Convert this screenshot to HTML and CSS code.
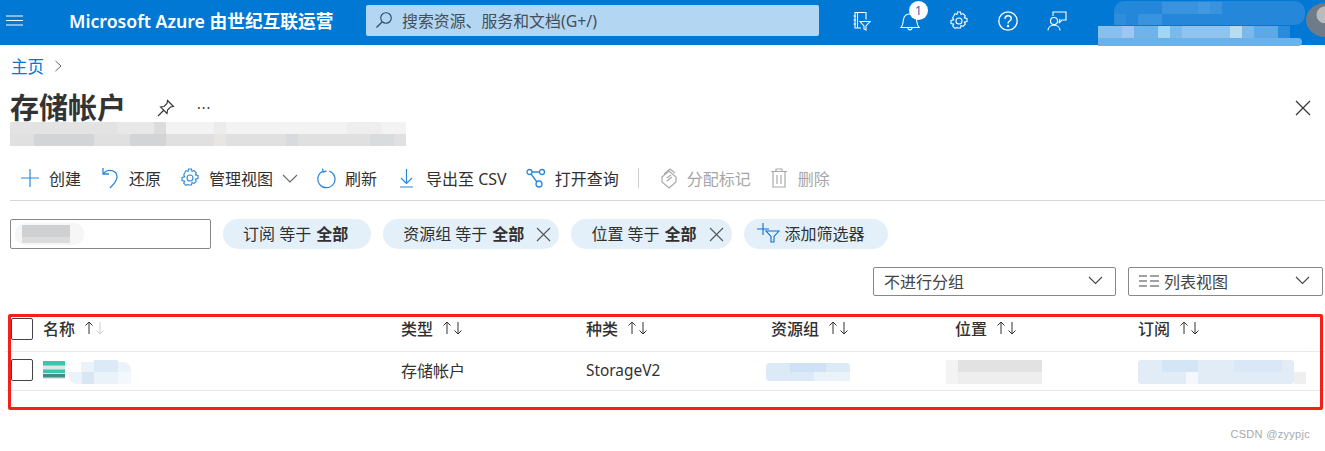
FILE: index.html
```html
<!DOCTYPE html>
<html lang="zh-CN">
<head>
<meta charset="utf-8">
<title>存储帐户</title>
<link rel="stylesheet" href="styles.css">
</head>
<body>
<header class="topbar">
  <svg class="burger" width="18" height="12" viewBox="0 0 18 12"><path d="M0 1h17M0 5.500h17M0 10h17" stroke="#fff" fill="none"/></svg>
  <div class="brand">Microsoft Azure 由世纪互联运营</div>
  <div class="search">
    <svg width="18" height="18" viewBox="0 0 18 18"><circle cx="11" cy="7" r="5.300" fill="none" stroke="#26486a" stroke-width="1.100"/><path d="M7 11l-5.500 5.500" stroke="#26486a" stroke-width="1.200"/></svg>
    <span>搜索资源、服务和文档(G+/)</span>
  </div>
  <div class="top-icons">
    <svg width="20" height="20" viewBox="0 0 20 20" fill="none" stroke="#fff" stroke-width="1.100"><path d="M10 17H4V1.500h11v7M6.500 1.500V17M2.500 5h2.500M2.500 9h2.500M2.500 13h2.500M9 10.500h10l-4 4.500v4l-2-1v-3z"/></svg>
    <div class="bell">
      <svg width="20" height="22" viewBox="0 0 20 22" fill="none" stroke="#fff" stroke-width="1.100"><path d="M1 17.500c2-2 2-5 2.500-8C4 6 6.500 4 10 4s6 2 6.500 5.500c.5 3 .5 6 2.500 8zM8 18c0 2.500 4 2.500 4 0"/></svg>
      <span class="badge">1</span>
    </div>
    <svg width="20" height="20" viewBox="0 0 20 20" fill="none" stroke="#fff" stroke-width="1.100"><circle cx="10" cy="10" r="3"/><path d="M8.500 1h3l.5 2.500 2-.9 2.300 2.200-1 2.100 2.700.6v3l-2.700.6 1 2.100-2.300 2.200-2-.9-.5 2.500h-3L8 16.500l-2 .9-2.300-2.200 1-2.100-2.700-.6v-3l2.700-.6-1-2.100L6 2.600l2 .9z"/></svg>
    <svg width="20" height="20" viewBox="0 0 20 20" fill="none" stroke="#fff" stroke-width="1.300"><circle cx="10" cy="10" r="9.200"/><path d="M7 7.800c0-4 6.300-4 6.300-.3 0 2.500-3.300 2.500-3.300 5" stroke-width="1.500"/><circle cx="10" cy="15" r=".6" fill="#fff"/></svg>
    <svg width="20" height="20" viewBox="0 0 20 20" fill="none" stroke="#fff" stroke-width="1.100"><circle cx="7" cy="10" r="3.500"/><path d="M1 19.500c0-7 12-7 12 0M6 5V1h13v8h-4l-3 3"/><path d="M12 12l1-4"/></svg>
  </div>
  <svg class="mosaic account" width="207" height="47" viewBox="0 0 207 47">
    <rect x="16" y="1" width="191" height="24" rx="10" fill="#2487da"/>
    <rect x="64" y="2" width="60" height="12" fill="#3a93de"/>
    <rect x="16" y="14" width="12" height="11" fill="#2e8edc"/>
    <rect x="40" y="14" width="24" height="11" fill="#3a93de"/>
    <rect x="100" y="2" width="12" height="12" fill="#4399e0"/>
    <rect y="26" width="192" height="12" fill="#7ab9ea"/>
    <rect x="0" y="26" width="24" height="12" fill="#88bfed"/>
    <rect x="24" y="26" width="12" height="12" fill="#9cc8ef"/>
    <rect x="36" y="26" width="24" height="12" fill="#70b3e8"/>
    <rect x="60" y="26" width="12" height="12" fill="#a3d6f2"/>
    <rect x="84" y="26" width="48" height="12" fill="#90c4ee"/>
    <rect x="132" y="26" width="12" height="12" fill="#b6dcf2"/>
    <rect x="156" y="26" width="24" height="12" fill="#5ea8e6"/>
    <rect x="180" y="26" width="12" height="12" fill="#2b8adb"/>
    <rect x="-4" y="38" width="208" height="8" rx="4" fill="#6cb2e8"/>
  </svg>
  <div class="avatar"></div>
</header>

<main class="page">
  <nav class="crumbs"><a>主页</a><svg width="9" height="12" viewBox="0 0 9 12"><path d="M1.500 1l5.500 5-5.500 5" fill="none" stroke="#666"/></svg></nav>

  <div class="title-row">
    <h1>存储帐户</h1>
    <svg class="pin" width="18" height="18" viewBox="0 0 18 18" fill="none" stroke="#333" stroke-width="1.100"><path d="M10.500 1.500l6 6-3 .5-3 3-.5 3.500-6.500-6.500L7 7.500l3-3zM6.500 11.500L1 17"/></svg>
    <span class="more">···</span>
    <svg class="close" width="16" height="16" viewBox="0 0 16 16"><path d="M1 1l14 14M15 1L1 15" stroke="#333" stroke-width="1.200"/></svg>
  </div>
  <svg class="mosaic subtitle" width="396" height="24" viewBox="0 0 396 24">
    <rect y="0" width="396" height="12" fill="#f3f3f3"/>
    <rect x="0" y="0" width="108" height="12" fill="#e3e3e3"/>
    <rect x="108" y="0" width="48" height="12" fill="#e8e8e8"/>
    <rect x="144" y="0" width="12" height="12" fill="#dcdcdc"/>
    <rect x="204" y="0" width="12" height="12" fill="#ececec"/>
    <rect x="336" y="0" width="36" height="12" fill="#eeeeee"/>
    <rect y="12" width="396" height="12" fill="#e0e0e0"/>
    <rect x="24" y="12" width="60" height="12" fill="#d3d4d5"/>
    <rect x="120" y="12" width="36" height="12" fill="#d3d4d5"/>
    <rect x="204" y="12" width="12" height="12" fill="#e8e6e3"/>
    <rect x="276" y="12" width="12" height="12" fill="#d8dbdd"/>
    <rect x="360" y="12" width="24" height="12" fill="#d9dcdc"/>
  </svg>

  <div class="toolbar">
    <button class="tool"><svg width="20" height="20" viewBox="0 0 20 20"><path d="M10 1v18M1 10h18" stroke="#2b88d8" stroke-width="1.200"/></svg>创建</button>
    <button class="tool"><svg width="20" height="22" viewBox="0 0 20 22" fill="none" stroke="#2b88d8" stroke-width="1.300"><path d="M3 1v6h6M3 7c5-6 14-4 14 3 0 4-4 8-7 11"/></svg>还原</button>
    <button class="tool"><svg width="20" height="20" viewBox="0 0 20 20" fill="none" stroke="#2b88d8" stroke-width="1.100"><circle cx="10" cy="10" r="3"/><path d="M8.500 1h3l.5 2.500 2-.9 2.300 2.200-1 2.100 2.700.6v3l-2.700.6 1 2.100-2.300 2.200-2-.9-.5 2.500h-3L8 16.500l-2 .9-2.300-2.200 1-2.100-2.700-.6v-3l2.700-.6-1-2.100L6 2.600l2 .9z"/></svg>管理视图<svg class="chev" width="16" height="9" viewBox="0 0 16 9"><path d="M1 1l7 7 7-7" fill="none" stroke="#666" stroke-width="1.100"/></svg></button>
    <button class="tool"><svg width="19" height="21" viewBox="0 0 21 23" fill="none" stroke="#2b88d8" stroke-width="1.400"><path d="M13.500 3.200A9.500 9.500 0 1 1 6.500 3.500M6 0.500l1 4 3.500-1.500"/></svg>刷新</button>
    <button class="tool"><svg width="21" height="20" viewBox="-3 0 21 20" fill="none" stroke="#2b88d8" stroke-width="1.200"><path d="M7.500 1v14M2 10l5.500 5.500L13 10M1 19h13"/></svg>导出至 CSV</button>
    <button class="tool"><svg width="20" height="20" viewBox="0 0 20 20" fill="none" stroke="#2b88d8" stroke-width="1.300"><circle cx="3.500" cy="4" r="2.500"/><circle cx="16" cy="4" r="2.500"/><circle cx="13" cy="16" r="3"/><path d="M6 4h7.500M5 6l6 8"/></svg>打开查询</button>
    <span class="tool-sep"></span>
    <button class="tool disabled"><svg width="20" height="21" viewBox="-3 0 20 21" fill="none" stroke="#aaa" stroke-width="1.200"><path d="M1 9l7-6 7 6v5l-7 6-7-6zM3 6l6-5 5 4M6 10l4-3M6 13l5-4"/></svg>分配标记</button>
    <button class="tool disabled"><svg width="19" height="20" viewBox="-1 0 19 20" fill="none" stroke="#aaa" stroke-width="1.200"><path d="M0 3.500h16M5 3.500V1h6v2.500M2 3.500V19h12V3.500M6 7v9M10 7v9"/></svg>删除</button>
  </div>

  <div class="filters">
    <div class="filter-input"><svg class="mosaic" width="73" height="26" viewBox="0 0 73 26"><rect x="4" y="2" width="69" height="22" rx="10" fill="#f6f6f6"/><rect x="11" y="4" width="48" height="12" fill="#cfd0d1"/><rect x="11" y="16" width="48" height="6" fill="#dcdcdc"/></svg></div>
    <div class="pill">订阅 等于 <b>全部</b></div>
    <div class="pill pill-close">资源组 等于 <b>全部</b><svg class="x" width="15" height="15" viewBox="0 0 15 15"><path d="M1 1l13 13M14 1L1 14" stroke="#555" stroke-width="1.100"/></svg></div>
    <div class="pill pill-close">位置 等于 <b>全部</b><svg class="x" width="15" height="15" viewBox="0 0 15 15"><path d="M1 1l13 13M14 1L1 14" stroke="#555" stroke-width="1.100"/></svg></div>
    <div class="pill add"><svg width="23" height="20" viewBox="0 0 23 20" fill="none" stroke="#0a6ed1" stroke-width="1.100"><path d="M6 0v12M0 6h12M9 8h13l-5 5.500V19h-3v-5.500z"/></svg>添加筛选器</div>
  </div>

  <div class="view-row">
    <div class="select group-select"><span>不进行分组</span><svg width="15" height="9" viewBox="0 0 15 9"><path d="M1 1l6.500 6.500L14 1" fill="none" stroke="#444" stroke-width="1.100"/></svg></div>
    <div class="select list-select"><span><svg width="20" height="12" viewBox="0 0 20 12"><path d="M0 1h8M0 6h8M0 11h8M11 1h9M11 6h9M11 11h9" stroke="#444" stroke-width="1.200"/></svg>列表视图</span><svg width="15" height="9" viewBox="0 0 15 9"><path d="M1 1l6.500 6.500L14 1" fill="none" stroke="#444" stroke-width="1.100"/></svg></div>
  </div>

  <section class="grid">
    <div class="grid-row head">
      <span class="check"></span>
      <div class="cell">名称<svg class="sort" width="22" height="14" viewBox="0 0 22 14" fill="none"><path d="M5 13V1M1.500 4.500L5 1l3.500 3.500" stroke="#333"/><path d="M16 1v12M12.500 9.500L16 13l3.500-3.500" stroke="#ccc"/></svg></div>
      <div class="cell">类型<svg class="sort" width="22" height="14" viewBox="0 0 22 14" fill="none" stroke="#333"><path d="M5 13V1M1.500 4.500L5 1l3.500 3.500M16 1v12M12.500 9.500L16 13l3.500-3.500"/></svg></div>
      <div class="cell">种类<svg class="sort" width="22" height="14" viewBox="0 0 22 14" fill="none" stroke="#333"><path d="M5 13V1M1.500 4.500L5 1l3.500 3.500M16 1v12M12.500 9.500L16 13l3.500-3.500"/></svg></div>
      <div class="cell">资源组<svg class="sort" width="22" height="14" viewBox="0 0 22 14" fill="none" stroke="#333"><path d="M5 13V1M1.500 4.500L5 1l3.500 3.500M16 1v12M12.500 9.500L16 13l3.500-3.500"/></svg></div>
      <div class="cell">位置<svg class="sort" width="22" height="14" viewBox="0 0 22 14" fill="none" stroke="#333"><path d="M5 13V1M1.500 4.500L5 1l3.500 3.500M16 1v12M12.500 9.500L16 13l3.500-3.500"/></svg></div>
      <div class="cell">订阅<svg class="sort" width="22" height="14" viewBox="0 0 22 14" fill="none" stroke="#333"><path d="M5 13V1M1.500 4.500L5 1l3.500 3.500M16 1v12M12.500 9.500L16 13l3.500-3.500"/></svg></div>
    </div>
    <div class="grid-row body">
      <span class="check"></span>
      <div class="cell">
        <svg width="22" height="18" viewBox="0 0 22 18"><rect width="22" height="18" fill="#e4e6e6"/><rect width="22" height="4.500" fill="#3cc4b0"/><rect y="8.500" width="22" height="3.500" fill="#3cc4b0"/><rect y="13" width="22" height="3.500" fill="#3f8c84"/></svg>
        <svg class="mosaic" width="62" height="24" viewBox="0 0 62 24"><rect x="0" y="2" width="62" height="22" rx="8" fill="#ebf3fa"/><rect x="0" y="0" width="12" height="12" fill="#fff"/><rect x="25" y="0" width="24" height="12" fill="#dce9f6"/><rect x="13" y="12" width="12" height="12" fill="#d8e5f3"/><rect x="49" y="12" width="13" height="12" fill="#f4f8fc"/></svg>
      </div>
      <div class="cell">存储帐户</div>
      <div class="cell latin">StorageV2</div>
      <div class="cell"><svg class="mosaic pull-rg" width="84" height="18" viewBox="0 0 84 18"><rect width="84" height="18" rx="3" fill="#dce9f6"/><rect x="24" width="36" height="9" fill="#cfe2f5"/><rect x="48" y="9" width="36" height="9" fill="#eaf2fa"/></svg></div>
      <div class="cell"><svg class="mosaic pull-loc" width="96" height="24" viewBox="0 0 96 24"><rect x="12" width="84" height="12" fill="#e2e2e2"/><rect x="12" y="12" width="84" height="12" fill="#eeeeee"/><rect y="0" width="12" height="24" fill="#f3f3f3"/></svg></div>
      <div class="cell"><svg class="mosaic" width="168" height="24" viewBox="0 0 168 24"><rect width="156" height="24" rx="3" fill="#e2ecf7"/><rect x="24" width="36" height="12" fill="#d4e5f5"/><rect x="96" width="48" height="12" fill="#d9e7f6"/><rect x="48" y="12" width="12" height="12" fill="#f4f8fc"/><rect x="156" y="12" width="12" height="12" fill="#efefef"/></svg></div>
    </div>
    <div class="highlight"></div>
  </section>

  <div class="credit">CSDN @zyypjc</div>
</main>
</body>
</html>
```
FILE: styles.css
```css
* { box-sizing: border-box; }
html, body { margin: 0; height: 100%; }
body {
  background: #fff;
  color: #323130;
  font-family: "Noto Sans", "Noto Sans CJK SC", sans-serif;
  overflow: hidden;
}
svg { display: block; flex: none; }

.topbar {
  height: 45px;
  background: #0078d4;
  display: flex;
  align-items: center;
  position: relative;
  padding: 0 0 4px 6px;
}
.brand { margin-left: 45px; color: #fff; font-size: 17.7px; font-weight: 600; white-space: nowrap; width: 297px; padding-bottom: 2px; }
.search {
  width: 453px;
  height: 31px;
  background: #b3d6f2;
  border-radius: 2px;
  display: flex;
  align-items: center;
  gap: 9px;
  padding: 0 0 1px 9px;
  color: #444f5a;
  font-size: 15.9px;
}
.top-icons { margin-left: 32px; display: flex; align-items: center; gap: 29px; }
.bell { position: relative; }
.badge {
  position: absolute;
  left: 9px;
  top: -9px;
  width: 19px;
  height: 19px;
  border-radius: 50%;
  background: #fff;
  color: #55a;
  font-size: 12px;
  line-height: 19px;
  text-align: center;
}
.account { position: absolute; left: 1098px; top: 0; }
.avatar {
  position: absolute;
  left: 1306px;
  top: 3px;
  width: 38px;
  height: 34px;
  border-radius: 50%;
  background: radial-gradient(circle at 50% 35%, #bbb 0 28%, #6f7b88 30%);
}

.page { padding: 0 0 0 10px; position: relative; }
.crumbs { height: 43px; display: flex; align-items: center; gap: 10px; padding: 0 0 1px 1px; font-size: 16.5px; }
.crumbs a { color: #0078d4; }
.title-row { display: flex; align-items: center; height: 40px; position: relative; }
h1 { margin: 0; font-size: 29px; font-weight: 700; line-height: 40px; color: #333; width: 147px; white-space: nowrap; }
.more { margin-left: 22px; font-size: 14px; letter-spacing: 1px; position: relative; top: -1px; }
.close { margin-left: auto; margin-right: 14px; }
.subtitle { margin-top: -6px; }

.toolbar {
  display: flex;
  align-items: center;
  height: 55px;
  border-bottom: 1px solid #d6d6d6;
  padding: 10px 0 0 10px;
  gap: 19px;
  font-size: 16px;
}
.tool {
  display: flex;
  align-items: center;
  gap: 9px;
  background: none;
  border: 0;
  padding: 0;
  font: inherit;
  color: #323130;
  white-space: nowrap;
}
.tool.disabled { color: #a6a6a6; }
.tool-sep { width: 1px; height: 20px; background: #d0d0d0; }

.filters { display: flex; align-items: center; gap: 12px; margin-top: 18px; font-size: 16px; }
.filter-input {
  width: 201px;
  height: 30px;
  border: 1px solid #888;
  border-radius: 2px;
  display: flex;
  align-items: center;
}
.pill {
  height: 30px;
  border-radius: 15px;
  background: #e3f0fa;
  display: flex;
  align-items: center;
  padding: 0 23px 3px 20px;
  gap: 5px;
  white-space: nowrap;
}
.pill b { font-weight: 700; }
.pill-close { padding-right: 8px; }
.pill .x { margin: 3px 0 0 7px; }
.pill.add { padding: 0 23px 2px 13px; }

.view-row { display: flex; justify-content: flex-end; gap: 12px; margin-top: 18px; padding-right: 2px; }
.select {
  height: 29px;
  border: 1px solid #888;
  border-radius: 2px;
  display: flex;
  align-items: center;
  justify-content: space-between;
  padding: 0 12px 2px 10px;
  font-size: 16px;
  color: #444;
}
.select span { display: flex; align-items: center; gap: 5px; }
.group-select { width: 243px; }
.list-select { width: 195px; }

.grid { position: relative; margin: 19px 0 0 1px; }
.grid-row {
  display: grid;
  grid-template-columns: 32px 358px 185px 185px 184px 183px 1fr;
  align-items: center;
  font-size: 16px;
  border-bottom: 1px solid #eaeaea;
  margin-left: -6px;
  padding-left: 6px;
}
.grid-row.head { height: 37px; font-weight: 500; padding-bottom: 8px; }
.grid-row.head .cell { margin-top: -2px; }
.grid-row.body { height: 39px; }
.check { width: 22px; height: 22px; border: 1px solid #444; border-radius: 2px; background: #fff; }
.grid-row.body .check { transform: translateY(-1px); }
.cell { display: flex; align-items: center; gap: 9px; white-space: nowrap; }
.grid-row.body .cell { gap: 4px; margin-top: -2px; }
.cell.latin { font-size: 15.4px; }
.grid-row.body .cell .mosaic { margin-top: 3px; }
.pull-rg { margin-left: -5px; }
.pull-loc { margin-left: -9px; }
.highlight {
  position: absolute;
  left: -3px;
  top: -1px;
  width: 1315px;
  height: 96px;
  border: 3px solid #f5201a;
  border-radius: 2px;
  pointer-events: none;
}
.credit { position: absolute; right: 15px; top: 383px; font-family: "Liberation Sans", sans-serif; font-size: 11px; color: #a9a9a9; letter-spacing: .3px; }
```
